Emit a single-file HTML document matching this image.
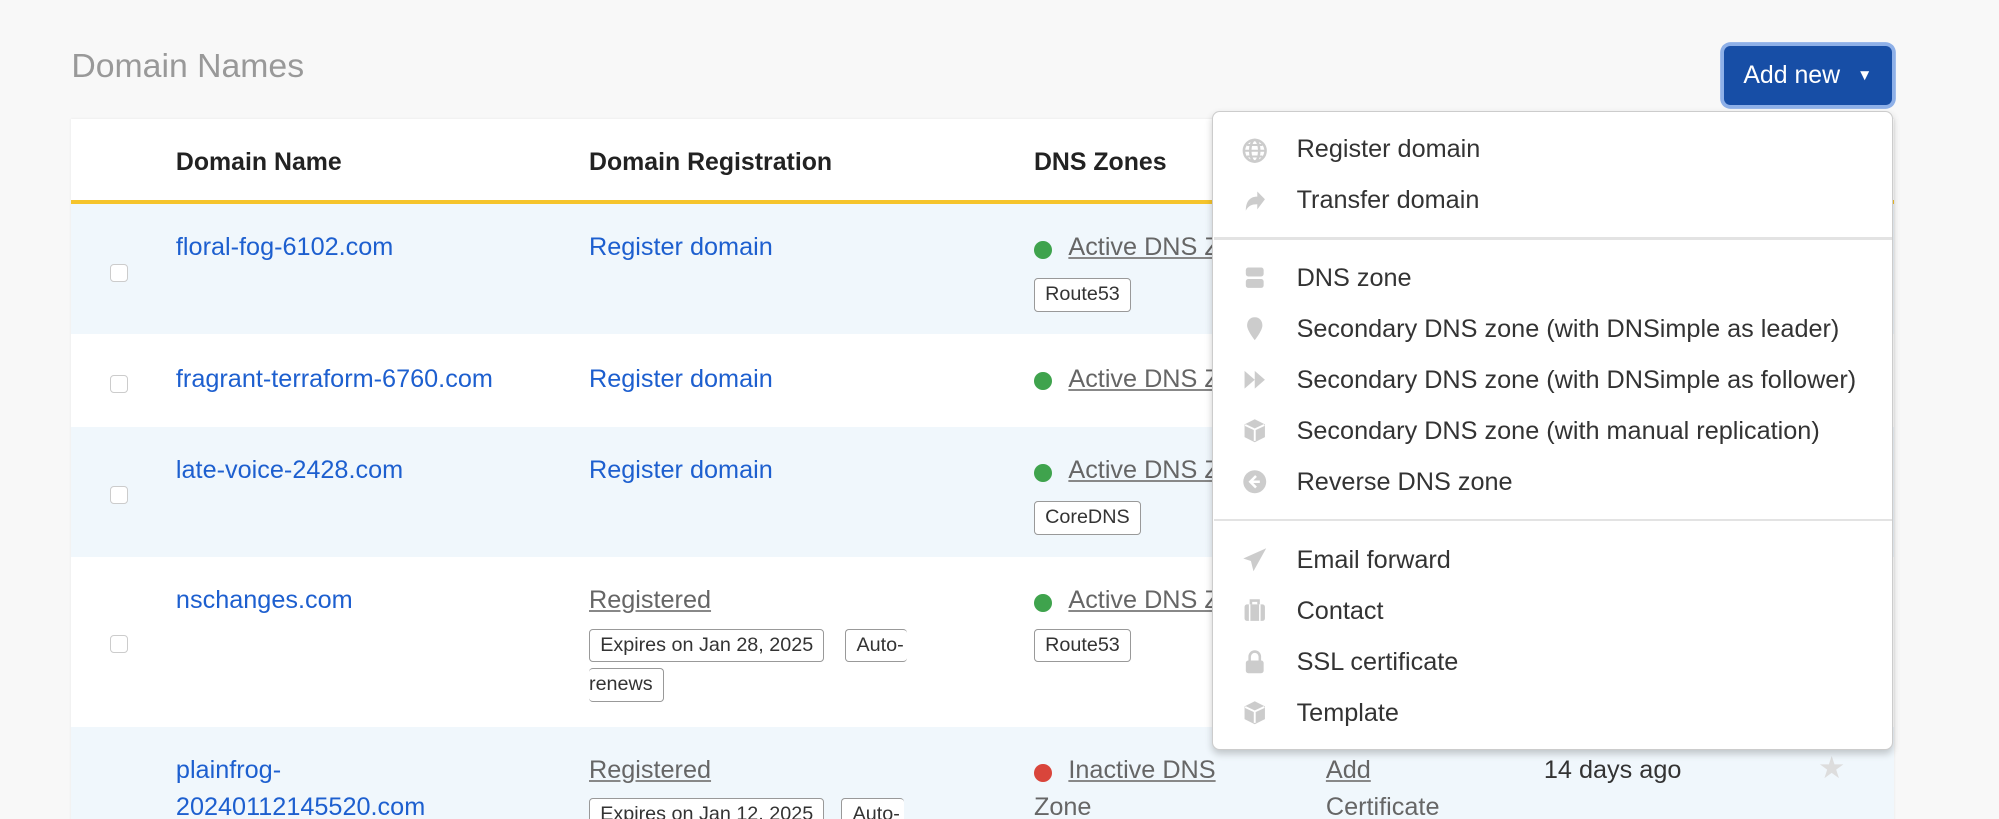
<!DOCTYPE html>
<html><head><meta charset="utf-8"><style>
html,body{margin:0;padding:0;background:#f8f8f8;overflow:hidden}
body{width:1999px;height:819px}
#w{zoom:1.2749;position:relative;width:1568px;height:643px;font-family:"Liberation Sans",sans-serif;overflow:hidden}
.a{position:absolute;white-space:nowrap}
.title{left:56px;top:37px;font-size:26.5px;color:#999}
.card{left:56px;top:93px;width:1430px;height:560px;background:#fff;box-shadow:0 0 2px rgba(0,0,0,.08)}
.th{font-weight:bold;font-size:19.5px;color:#222;top:116px}
.yl{left:56px;top:157px;width:1430px;height:3px;background:#f5c42c}
.row{left:56px;width:1430px}
.bl{background:#f0f7fc}
.lnk{font-size:19.8px;color:#1d5fcf}
.cb{width:13px;height:13px;border:1px solid #ccc;border-radius:3px;background:#fff;left:86px}
.dot{width:14px;height:14px;border-radius:50%}
.g{color:#666;font-size:19.8px;text-decoration:underline;text-decoration-color:#888}
.bd{border:1px solid #999;border-radius:3px;font-size:15.5px;color:#333;padding:0 8px;height:25px;line-height:25px;background:#fff}
.btn{left:1352px;top:36px;width:132px;height:46px;background:#174ea6;border-radius:5px;box-shadow:0 0 0 3px #8eb0e8;color:#fff;font-size:19.5px;line-height:46px;text-align:center}
.dd{left:951px;top:87px;width:532px;height:500px;background:#fff;border:1px solid #ccc;border-radius:6px;box-shadow:0 3px 6px rgba(0,0,0,.2)}
.it{left:1017px;font-size:19.8px;color:#333}
.ic{left:974px;width:20px;height:20px}
.hr{left:952px;width:532px;height:2px;background:#e3e3e3}
</style></head><body><div id="w">
<div class="a title">Domain Names</div>
<div class="a card"></div>
<div class="a th" style="left:138px">Domain Name</div>
<div class="a th" style="left:462px">Domain Registration</div>
<div class="a th" style="left:811px">DNS Zones</div>
<div class="a yl"></div>
<div class="a row bl" style="top:160px;height:102px"></div>
<div class="a row bl" style="top:335px;height:102px"></div>
<div class="a row bl" style="top:570px;height:80px"></div>

<div class="a cb" style="top:207px"></div>
<div class="a cb" style="top:294px"></div>
<div class="a cb" style="top:381px"></div>
<div class="a cb" style="top:498px"></div>

<div class="a lnk" style="left:138px;top:183px">floral-fog-6102.com</div>
<div class="a lnk" style="left:462px;top:183px">Register domain</div>
<div class="a dot" style="left:811px;top:189px;background:#3fa34d"></div>
<div class="a g" style="left:838px;top:183px">Active DNS Zone</div>
<div class="a bd" style="left:811px;top:218px">Route53</div>

<div class="a lnk" style="left:138px;top:286px">fragrant-terraform-6760.com</div>
<div class="a lnk" style="left:462px;top:286px">Register domain</div>
<div class="a dot" style="left:811px;top:292px;background:#3fa34d"></div>
<div class="a g" style="left:838px;top:286px">Active DNS Zone</div>

<div class="a lnk" style="left:138px;top:358px">late-voice-2428.com</div>
<div class="a lnk" style="left:462px;top:358px">Register domain</div>
<div class="a dot" style="left:811px;top:364px;background:#3fa34d"></div>
<div class="a g" style="left:838px;top:358px">Active DNS Zone</div>
<div class="a bd" style="left:811px;top:393px">CoreDNS</div>

<div class="a lnk" style="left:138px;top:460px">nschanges.com</div>
<div class="a g" style="left:462px;top:460px">Registered</div>
<div class="a bd" style="left:462px;top:493px">Expires on Jan 28, 2025</div>
<div class="a bd" style="left:663px;top:493px;width:32px;overflow:hidden;border-right:none">Auto-</div>
<div class="a bd" style="left:462px;top:524px;border-left:none;padding-left:0">renews</div>
<div class="a dot" style="left:811px;top:466px;background:#3fa34d"></div>
<div class="a g" style="left:838px;top:460px">Active DNS Zone</div>
<div class="a bd" style="left:811px;top:493px">Route53</div>

<div class="a lnk" style="left:138px;top:593px">plainfrog-</div>
<div class="a lnk" style="left:138px;top:622px">20240112145520.com</div>
<div class="a g" style="left:462px;top:593px">Registered</div>
<div class="a bd" style="left:462px;top:626px">Expires on Jan 12, 2025</div>
<div class="a bd" style="left:660px;top:626px;width:32px;overflow:hidden;border-right:none">Auto-</div>
<div class="a dot" style="left:811px;top:599px;background:#d9453b"></div>
<div class="a g" style="left:838px;top:593px">Inactive DNS</div>
<div class="a" style="left:811px;top:622px;font-size:19.8px;color:#666">Zone</div>
<div class="a g" style="left:1040px;top:593px">Add</div>
<div class="a" style="left:1040px;top:622px;font-size:19.8px;color:#666">Certificate</div>
<div class="a" style="left:1211px;top:593px;font-size:19.8px;color:#333">14 days ago</div>
<div class="a" style="left:1426px;top:589px;font-size:24px;color:#ddd">★</div>

<div class="a btn">Add new <span style="font-size:12px;position:relative;top:-2px;margin-left:8px">▼</span></div>

<div class="a dd"></div>
<svg class="a ic" style="top:108px" viewBox="0 0 20 20"><circle cx="10" cy="10" r="8.5" fill="none" stroke="#ccc" stroke-width="2"/><ellipse cx="10" cy="10" rx="3.5" ry="8.5" fill="none" stroke="#ccc" stroke-width="2"/><path d="M2 10h16M4 5.5h12M4 14.5h12" stroke="#ccc" stroke-width="1.6"/></svg>
<div class="a it" style="top:106px">Register domain</div>
<svg class="a ic" style="top:148px" viewBox="0 0 20 20"><path d="M18 8l-6-6v4C6 6 3 10 3 17c2-4 5-5 9-5v4z" fill="#ccc"/></svg>
<div class="a it" style="top:146px">Transfer domain</div>
<div class="a hr" style="top:186px"></div>
<svg class="a ic" style="top:208px" viewBox="0 0 20 20"><rect x="3" y="2" width="14" height="7" rx="2" fill="#ccc"/><rect x="3" y="11" width="14" height="7" rx="2" fill="#ccc"/></svg>
<div class="a it" style="top:207px">DNS zone</div>
<svg class="a ic" style="top:248px" viewBox="0 0 20 20"><path d="M10 1c-4 0-6 3-6 6.5 0 4 6 11.5 6 11.5s6-7.5 6-11.5C16 4 14 1 10 1z" fill="#ccc"/></svg>
<div class="a it" style="top:247px">Secondary DNS zone (with DNSimple as leader)</div>
<svg class="a ic" style="top:288px" viewBox="0 0 20 20"><path d="M2 3l8 7-8 7zM10 3l8 7-8 7z" fill="#ccc"/></svg>
<div class="a it" style="top:287px">Secondary DNS zone (with DNSimple as follower)</div>
<svg class="a ic" style="top:328px" viewBox="0 0 20 20"><path d="M10 1l8 4v10l-8 4-8-4V5z" fill="#ccc"/><path d="M2.5 5.5L10 9l7.5-3.5M10 9v9" stroke="#fff" stroke-width="1.5" fill="none"/></svg>
<div class="a it" style="top:327px">Secondary DNS zone (with manual replication)</div>
<svg class="a ic" style="top:368px" viewBox="0 0 20 20"><circle cx="10" cy="10" r="9" fill="#ccc"/><path d="M11 5.5L6.5 10l4.5 4.5M7 10h7" stroke="#fff" stroke-width="2" fill="none"/></svg>
<div class="a it" style="top:367px">Reverse DNS zone</div>
<div class="a hr" style="top:407px"></div>
<svg class="a ic" style="top:429px" viewBox="0 0 20 20"><path d="M19 1L1 9l6 2 2 8z" fill="#ccc"/></svg>
<div class="a it" style="top:428px">Email forward</div>
<svg class="a ic" style="top:469px" viewBox="0 0 20 20"><rect x="2" y="5" width="16" height="13" rx="2" fill="#ccc"/><path d="M7 5V2h6v3" stroke="#ccc" stroke-width="2" fill="none"/><path d="M6 5v13M14 5v13" stroke="#fff" stroke-width="1.2"/></svg>
<div class="a it" style="top:468px">Contact</div>
<svg class="a ic" style="top:509px" viewBox="0 0 20 20"><rect x="3" y="9" width="14" height="10" rx="2" fill="#ccc"/><path d="M6 9V6a4 4 0 018 0v3" stroke="#ccc" stroke-width="2" fill="none"/></svg>
<div class="a it" style="top:508px">SSL certificate</div>
<svg class="a ic" style="top:549px" viewBox="0 0 20 20"><path d="M10 1l8 4v10l-8 4-8-4V5z" fill="#ccc"/><path d="M2.5 5.5L10 9l7.5-3.5M10 9v9" stroke="#fff" stroke-width="1.5" fill="none"/></svg>
<div class="a it" style="top:548px">Template</div>
</div></body></html>
